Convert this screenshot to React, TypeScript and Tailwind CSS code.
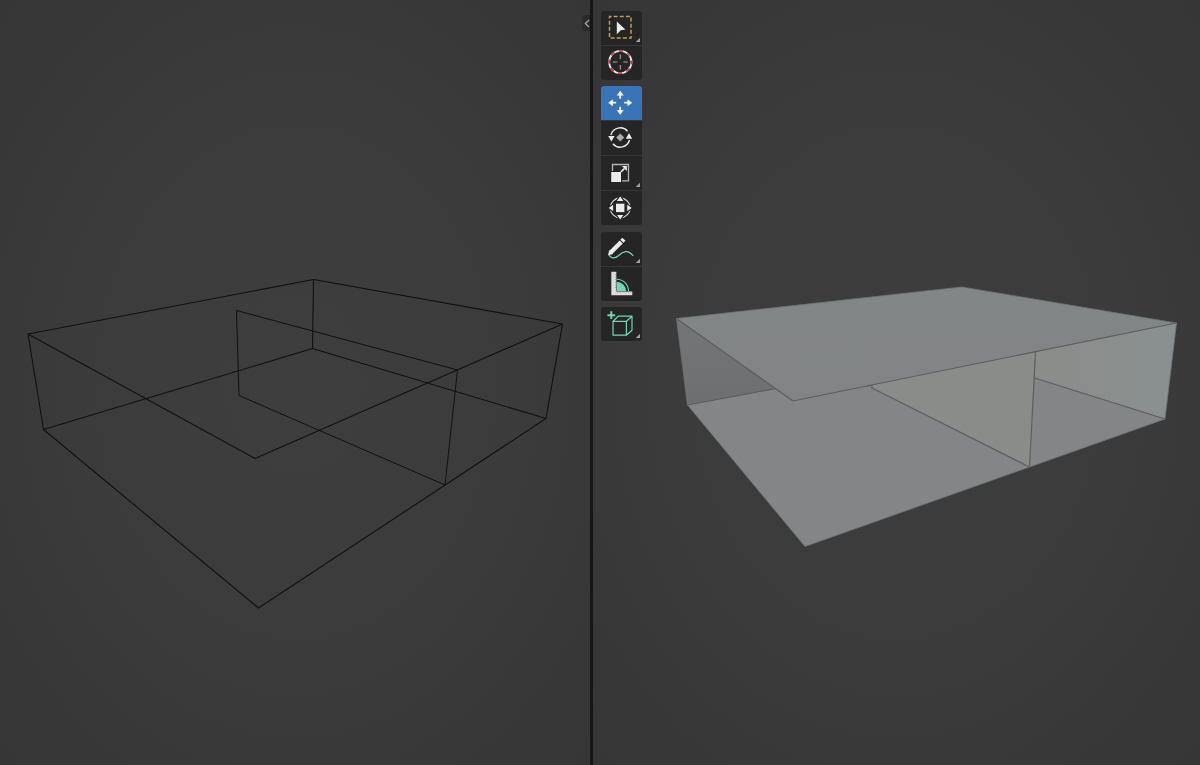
import type { ReactNode } from 'react'
import clsx from 'clsx'

type Tool = { id: string; icon: ReactNode; more?: boolean }

const MINT = '#74d5b1'
const WHITE = '#ececec'

// four arrow heads around a center, tip at 11.5
const HEADS = [0, 90, 180, 270]

const TOOL_GROUPS: Tool[][] = [
  [
    {
      id: 'Select Box',
      more: true,
      icon: (
        <>
          <rect x="8.500" y="5.500" width="21.500" height="21.500" fill="none" stroke="#c39c4c" strokeWidth="1.500" strokeDasharray="4 2.140" strokeDashoffset="2" />
          <path d="M15.800 10.400 24.400 18.400 19.800 19.200 15.800 23.200Z" fill={WHITE} />
        </>
      ),
    },
    {
      id: 'Cursor',
      icon: (
        <g transform="translate(19.3 16)" fill="none">
          <circle r="11.2" stroke={WHITE} strokeWidth="1.8" />
          <circle r="11.2" stroke="#b5484e" strokeWidth="2" strokeDasharray="4.4 4.4" strokeDashoffset="2" />
          <path d="M0-7.5V-3M0 3V7.5M-7.5 0H-3M3 0H7.5" stroke="#a8a8a8" strokeWidth="1.1" />
        </g>
      ),
    },
  ],
  [
    {
      id: 'Move',
      icon: (
        <g transform="translate(19.2 16.7)">
          {HEADS.map((a) => (
            <path key={a} transform={`rotate(${a})`} d="M0-12 3.500-7.300H.9V-4H-.9V-7.300H-3.500Z" fill="#f4f7fb" />
          ))}
        </g>
      ),
    },
    {
      id: 'Rotate',
      icon: (
        <g transform="translate(19.2 16.5)">
          <path d="M-9.3-2.5A9.7 9.7 0 0 1 7.400-6.300M9.3 2.5A9.7 9.7 0 0 1-7.400 6.300" fill="none" stroke={WHITE} strokeWidth="1.4" />
          <path d="M-12-1.4H-5.600L-8.8 4ZM5.600 1.200H12L8.8-4.600Z" fill={WHITE} />
          <path d="M0-4 4 0 0 4-4 0Z" fill="#adadad" />
        </g>
      ),
    },
    {
      id: 'Scale',
      more: true,
      icon: (
        <>
          <path d="M11.5 15V8.5H27.5V24.9H21" fill="none" stroke="#b5b5b5" strokeWidth="1.3" />
          <rect x="10.2" y="16" width="9.8" height="10" fill={WHITE} />
          <path d="M20 15.9 23.4 12.5" stroke={WHITE} strokeWidth="1.7" />
          <path d="M20.9 10.1H25.9V15.1Z" fill={WHITE} />
        </>
      ),
    },
    {
      id: 'Transform',
      icon: (
        <g transform="translate(19.2 16.9)">
          <circle r="9.9" fill="none" stroke="#d0d0d0" strokeWidth="1.3" />
          {HEADS.map((a) => (
            <path key={a} transform={`rotate(${a})`} d="M0-12.600 4.300-6.400H-4.300Z" fill={WHITE} stroke="#252525" strokeWidth="1.2" />
          ))}
          <rect x="-4.2" y="-4.2" width="8.4" height="8.4" fill={WHITE} />
        </g>
      ),
    },
  ],
  [
    {
      id: 'Annotate',
      more: true,
      icon: (
        <>
          <path d="M8 22.8C10 27 14.5 26.8 18 23.3S26.5 16.8 32.2 23.8" fill="none" stroke={MINT} strokeWidth="1.3" />
          <path d="M7 23.300 8.300 17.900 12.300 21.900Z" fill={WHITE} />
          <path d="M9.900 20.300 20.200 10" stroke={WHITE} strokeWidth="4.4" />
          <path d="M20.900 9.300 22.900 7.300" stroke={WHITE} strokeWidth="4.4" />
        </>
      ),
    },
    {
      id: 'Measure',
      icon: (
        <>
          <path d="M15.7 24V14.7A9.3 9.3 0 0 1 25 24Z" fill={MINT} />
          <path d="M15.7 12.2A11.8 11.8 0 0 1 27.5 24" fill="none" stroke={MINT} strokeWidth="1.1" />
          <path d="M10.3 4.8H15.3V24.6H31.3V28.2H10.3Z" fill="#dcdcdc" />
          <path d="M14.800 7V23" stroke="#888" strokeDasharray="1 1.6" />
          <path d="M16 25H30" stroke="#888" strokeDasharray="1 1.6" />
        </>
      ),
    },
  ],
  [
    {
      id: 'Add Cube',
      more: true,
      icon: (
        <>
          <path d="M10.3 4.3V12M6.4 8.2H14.2" stroke={MINT} strokeWidth="2" />
          <path d="M12 14.3H25.4V28.2H12ZM12 14.3 17.2 9.2H31L25.4 14.3M31 9.2V23.2L25.4 28.2" fill="none" stroke={MINT} strokeWidth="1.2" strokeLinejoin="round" />
        </>
      ),
    },
  ],
]

function ToolButton({ tool, active }: { tool: Tool; active: boolean }) {
  return (
    <button aria-label={tool.id} className={clsx('block h-[34px] w-[41px]', active ? 'bg-[#3a74b8]' : 'bg-[#252525]')}>
      <svg width="41" height="34" viewBox="0 0 41 34">
        {tool.icon}
        {tool.more && <path d="M39 26.700V31H34.700Z" fill="#a0a0a0" />}
      </svg>
    </button>
  )
}

function Toolbar() {
  return (
    <div className="relative flex w-[41px] flex-col gap-1.5">
      {TOOL_GROUPS.map((group, i) => (
        <div key={i} className={clsx('flex flex-col gap-px overflow-hidden rounded-[3px] bg-[#363636]', i === 2 && 'mt-px')}>
          {group.map((tool) => (
            <ToolButton key={tool.id} tool={tool} active={tool.id === 'Move'} />
          ))}
        </div>
      ))}
    </div>
  )
}

function WireScene() {
  return (
    <svg className="block" width="590" height="765" viewBox="0 0 590 765" fill="none" stroke="#111" strokeWidth="1.1" strokeLinejoin="round">
      <path d="M28 334 313.5 279.5 562.5 324 255 458.5Z" />
      <path d="M43.5 429.5 312.5 348.5 546 418.5 258.5 608Z" />
      <path d="M28 334 43.5 429.5M313.5 279.5 312.5 348.5M562.5 324 546 418.5" />
      <path d="M236.5 310.5 457.5 370 445 485 239 395.5Z" strokeWidth="1" />
    </svg>
  )
}

function SolidScene() {
  return (
    <svg className="absolute inset-0" width="607" height="765" viewBox="593 0 607 765" strokeLinejoin="round">
      <defs>
        <linearGradient id="top" x1="0" y1="0" x2="0.15" y2="1">
          <stop offset="0" stopColor="#838687" />
          <stop offset="1" stopColor="#818384" />
        </linearGradient>
        <linearGradient id="back" x1="0" y1="0" x2="1" y2="0">
          <stop offset="0" stopColor="#8b8d8b" />
          <stop offset="0.45" stopColor="#8b8e8c" />
          <stop offset="1" stopColor="#899091" />
        </linearGradient>
        <linearGradient id="side" x1="0" y1="0" x2="0" y2="1">
          <stop offset="0" stopColor="#737576" />
          <stop offset="1" stopColor="#6d6f70" />
        </linearGradient>
      </defs>
      <path d="M687.5 405 776 388.5 873 386 1035 376 1165 419 1029.500 467 805 546.500Z" fill="#838586" />
      <path d="M676.500 318.500 793 401 776 388.500 687.500 405Z" fill="url(#side)" />
      <path d="M1035 350 1176.500 323 1165 419 1035 377.500Z" fill="url(#back)" />
      <path d="M870 382 1035.500 350 1029.500 467 872 388Z" fill="#8a8c8a" />
      <path d="M676.500 318.500 962 287 1176.500 323 793 401Z" fill="url(#top)" />
      <g fill="none" stroke="#5c5e5f" strokeWidth="1.2">
        <path d="M676.500 318.500 793 401 1176.500 323" />
        <path d="M687.500 405 776 388.500" />
        <path d="M872 385V388L1029.500 467 1035.500 352" />
        <path d="M1034.500 378 1165 419" />
      </g>
      <path d="M687.500 405 676.500 318.500 962 287 1176.500 323 1165 419 805 546.500Z" fill="none" stroke="#707374" strokeWidth="0.8" />
    </svg>
  )
}

export default function App() {
  return (
    <div className="flex h-[765px] w-[1200px] overflow-hidden bg-[#161616]">
      <div className="relative w-[590px] bg-[radial-gradient(ellipse_75%_75%_at_50%_50%,#3e3e3e_0%,#3b3b3b_50%,#353535_100%)]">
        <WireScene />
        <div className="absolute top-[15px] right-0 flex h-4 w-2 items-center justify-center rounded-l-[3px] bg-[#2b2b2b]">
          <svg className="ml-px" width="6" height="9" viewBox="0 0 6 9" fill="none" stroke="#a8a8a8" strokeWidth="1.2">
            <path d="M5 1 1.300 4.500 5 8" />
          </svg>
        </div>
      </div>
      <div className="relative ml-[3px] w-[607px] bg-[radial-gradient(ellipse_75%_75%_at_50%_50%,#3e3e3e_0%,#3b3b3b_50%,#353535_100%)] pt-[11px] pl-2">
        <SolidScene />
        <Toolbar />
      </div>
    </div>
  )
}
